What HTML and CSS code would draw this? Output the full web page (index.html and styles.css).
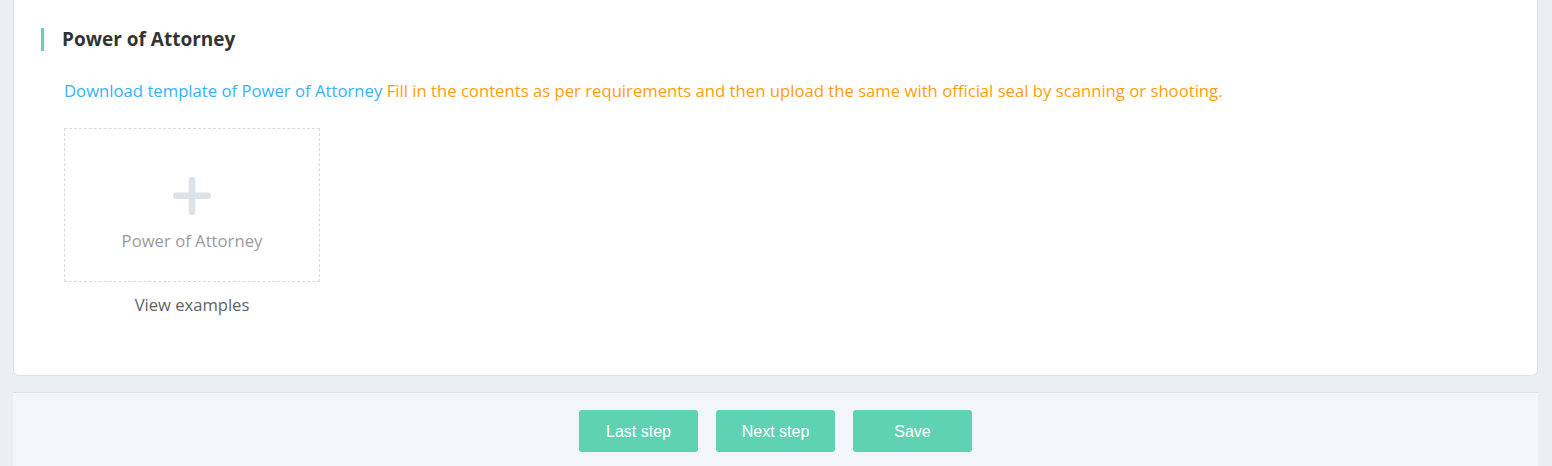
FILE: index.html
```html
<!DOCTYPE html>
<html>
<head>
<meta charset="utf-8">
<link rel="stylesheet" href="styles.css">
</head>
<body>
<div class="page">
  <section class="card">
    <h2 class="title"><span class="bar"></span><span class="title-text">Power of Attorney</span></h2>
    <div class="content">
      <p class="hint"><a class="link">Download template of Power of Attorney</a> <span class="warn">Fill in the contents as per requirements and then upload the same with official seal by scanning or shooting.</span></p>
      <div class="upload-wrap">
        <div class="upload">
          <svg class="plus" width="40" height="40" viewBox="0 0 40 40"><rect x="1" y="16.5" width="38" height="6.5" rx="3.2" fill="#dde2e8"/><rect x="16.75" y="1" width="6.5" height="38" rx="3.2" fill="#dde2e8"/></svg>
          <span class="upload-label">Power of Attorney</span>
        </div>
        <div class="examples">View examples</div>
      </div>
    </div>
  </section>
  <footer class="footer">
    <button class="btn">Last step</button>
    <button class="btn">Next step</button>
    <button class="btn">Save</button>
  </footer>
</div>
</body>
</html>
```

FILE: styles.css
```css
html, body {
  margin: 0;
  padding: 0;
  background: #ebeff4;
  font-family: "Open Sans", "Noto Sans", sans-serif;
  height: 466px;
  overflow: hidden;
}
.page {
  padding: 0 14px 0 13px;
}
.card {
  background: #fff;
  border: 1px solid #dde2e8;
  border-top: none;
  border-radius: 0 0 6px 6px;
  padding: 28px 27px 58px;
}
.title {
  display: flex;
  align-items: center;
  margin: 0;
  height: 23px;
  font-size: 19px;
  font-weight: 700;
  color: #333;
}
.title-text {
  padding-bottom: 2px;
}
.bar {
  width: 3px;
  height: 23px;
  background: #5fd2b4;
  margin-right: 18px;
}
.content {
  padding-left: 23px;
}
.hint {
  margin: 28px 0 0;
  font-size: 16.7px;
  line-height: 24px;
}
.link { color: #36b2f7; }
.warn { color: #ff9d0b; }
.upload-wrap {
  margin-top: 25px;
  width: 256px;
}
.upload {
  box-sizing: border-box;
  width: 256px;
  height: 154px;
  border: 1px dashed #d6d9de;
  display: flex;
  flex-direction: column;
  align-items: center;
  padding-top: 47px;
}
.plus { display: block; }
.upload-label {
  margin-top: 15px;
  font-size: 16.7px;
  line-height: 20px;
  color: #9b9b9b;
}
.examples {
  margin-top: 11px;
  text-align: center;
  font-size: 16.6px;
  line-height: 24px;
  color: #5f6266;
}
.footer {
  margin-top: 16px;
  background: #f2f5f9;
  border-top: 1px solid #dbe1e8;
  height: 100px;
  display: flex;
  justify-content: center;
  gap: 18px;
  padding-top: 17px;
}
.btn {
  width: 119px;
  height: 42px;
  border: none;
  border-radius: 3px;
  background: #5fd2b4;
  color: #fff;
  font-family: "Liberation Sans", Arial, sans-serif;
  font-size: 16px;
  padding: 2px 0 0;
}
```
